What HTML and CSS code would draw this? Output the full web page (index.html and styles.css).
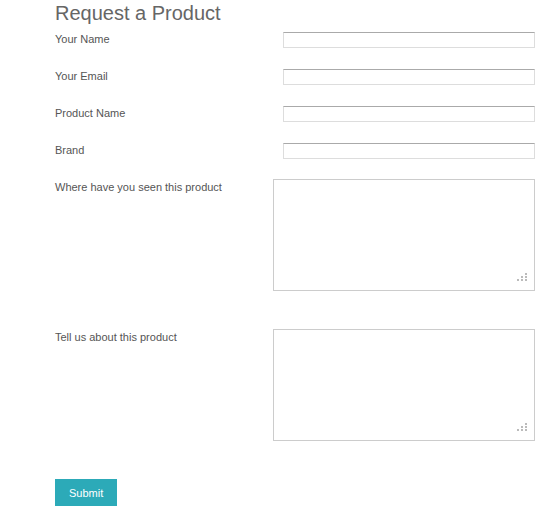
FILE: index.html
```html
<!DOCTYPE html>
<html lang="en">
<head>
    <meta charset="UTF-8">
    <meta name="viewport" content="width=device-width, initial-scale=1.0">
    <title>Request a Product</title>
    <link rel="stylesheet" href="styles.css">
</head>
<body>
    <section class="request">
        <h1>Request a Product</h1>
        <form id="request-form">
            <div class="row">
                <label for="name">Your Name</label>
                <input type="text" id="name" name="name">
            </div>
            <div class="row">
                <label for="email">Your Email</label>
                <input type="email" id="email" name="email">
            </div>
            <div class="row">
                <label for="product">Product Name</label>
                <input type="text" id="product" name="product">
            </div>
            <div class="row row-last">
                <label for="brand">Brand</label>
                <input type="text" id="brand" name="brand">
            </div>
            <div class="row row-area">
                <label for="seen">Where have you seen this product</label>
                <div class="area">
                    <textarea id="seen" name="seen"></textarea>
                    <svg class="grip" width="10" height="8" viewBox="0 0 10 8">
                        <rect x="8" y="0" width="2" height="2"/>
                        <rect x="4" y="3" width="2" height="2"/>
                        <rect x="8" y="3" width="2" height="2"/>
                        <rect x="0" y="6" width="2" height="2"/>
                        <rect x="4" y="6" width="2" height="2"/>
                        <rect x="8" y="6" width="2" height="2"/>
                    </svg>
                </div>
            </div>
            <div class="row row-area">
                <label for="about">Tell us about this product</label>
                <div class="area">
                    <textarea id="about" name="about"></textarea>
                    <svg class="grip" width="10" height="8" viewBox="0 0 10 8">
                        <rect x="8" y="0" width="2" height="2"/>
                        <rect x="4" y="3" width="2" height="2"/>
                        <rect x="8" y="3" width="2" height="2"/>
                        <rect x="0" y="6" width="2" height="2"/>
                        <rect x="4" y="6" width="2" height="2"/>
                        <rect x="8" y="6" width="2" height="2"/>
                    </svg>
                </div>
            </div>
            <button type="submit">Submit</button>
        </form>
    </section>
</body>
</html>
```

FILE: styles.css
```css
body {
    font-family: "Liberation Sans", Arial, sans-serif;
    margin: 0;
    padding: 0;
    background-color: #fff;
    color: #555;
}
.request {
    width: 480px;
    padding: 0 0 0 55px;
}
.request h1 {
    margin: 1px 0 0;
    font-size: 20px;
    line-height: 24px;
    font-weight: normal;
    color: #666;
}
form { margin-top: 7px; }
.row {
    display: flex;
    justify-content: space-between;
    align-items: flex-start;
    margin-bottom: 21px;
}
.row-last { margin-bottom: 20px; }
.row-area { margin-bottom: 38px; }
label {
    font-size: 11px;
    line-height: 14px;
}
.row-area label { margin-top: 1px; }
input {
    box-sizing: border-box;
    width: 252px;
    height: 16px;
    margin: 0;
    padding: 0 3px;
    border: 1px solid #ddd;
    border-top-color: #aaa;
    border-radius: 0;
    font: 11px "Liberation Sans", Arial, sans-serif;
}
.area { position: relative; width: 262px; height: 112px; }
textarea {
    box-sizing: border-box;
    display: block;
    width: 262px;
    height: 112px;
    margin: 0;
    padding: 3px;
    border: 1px solid #ccc;
    resize: none;
    font: 11px "Liberation Sans", Arial, sans-serif;
}
.grip { position: absolute; right: 8px; bottom: 10px; fill: #bbb; }
button {
    display: block;
    height: 27px;
    padding: 0 14px;
    border: none;
    border-radius: 0;
    background: #2caab8;
    color: #fff;
    font: 11px "Liberation Sans", Arial, sans-serif;
    cursor: pointer;
}
button:hover { background: #2596a3; }
```
